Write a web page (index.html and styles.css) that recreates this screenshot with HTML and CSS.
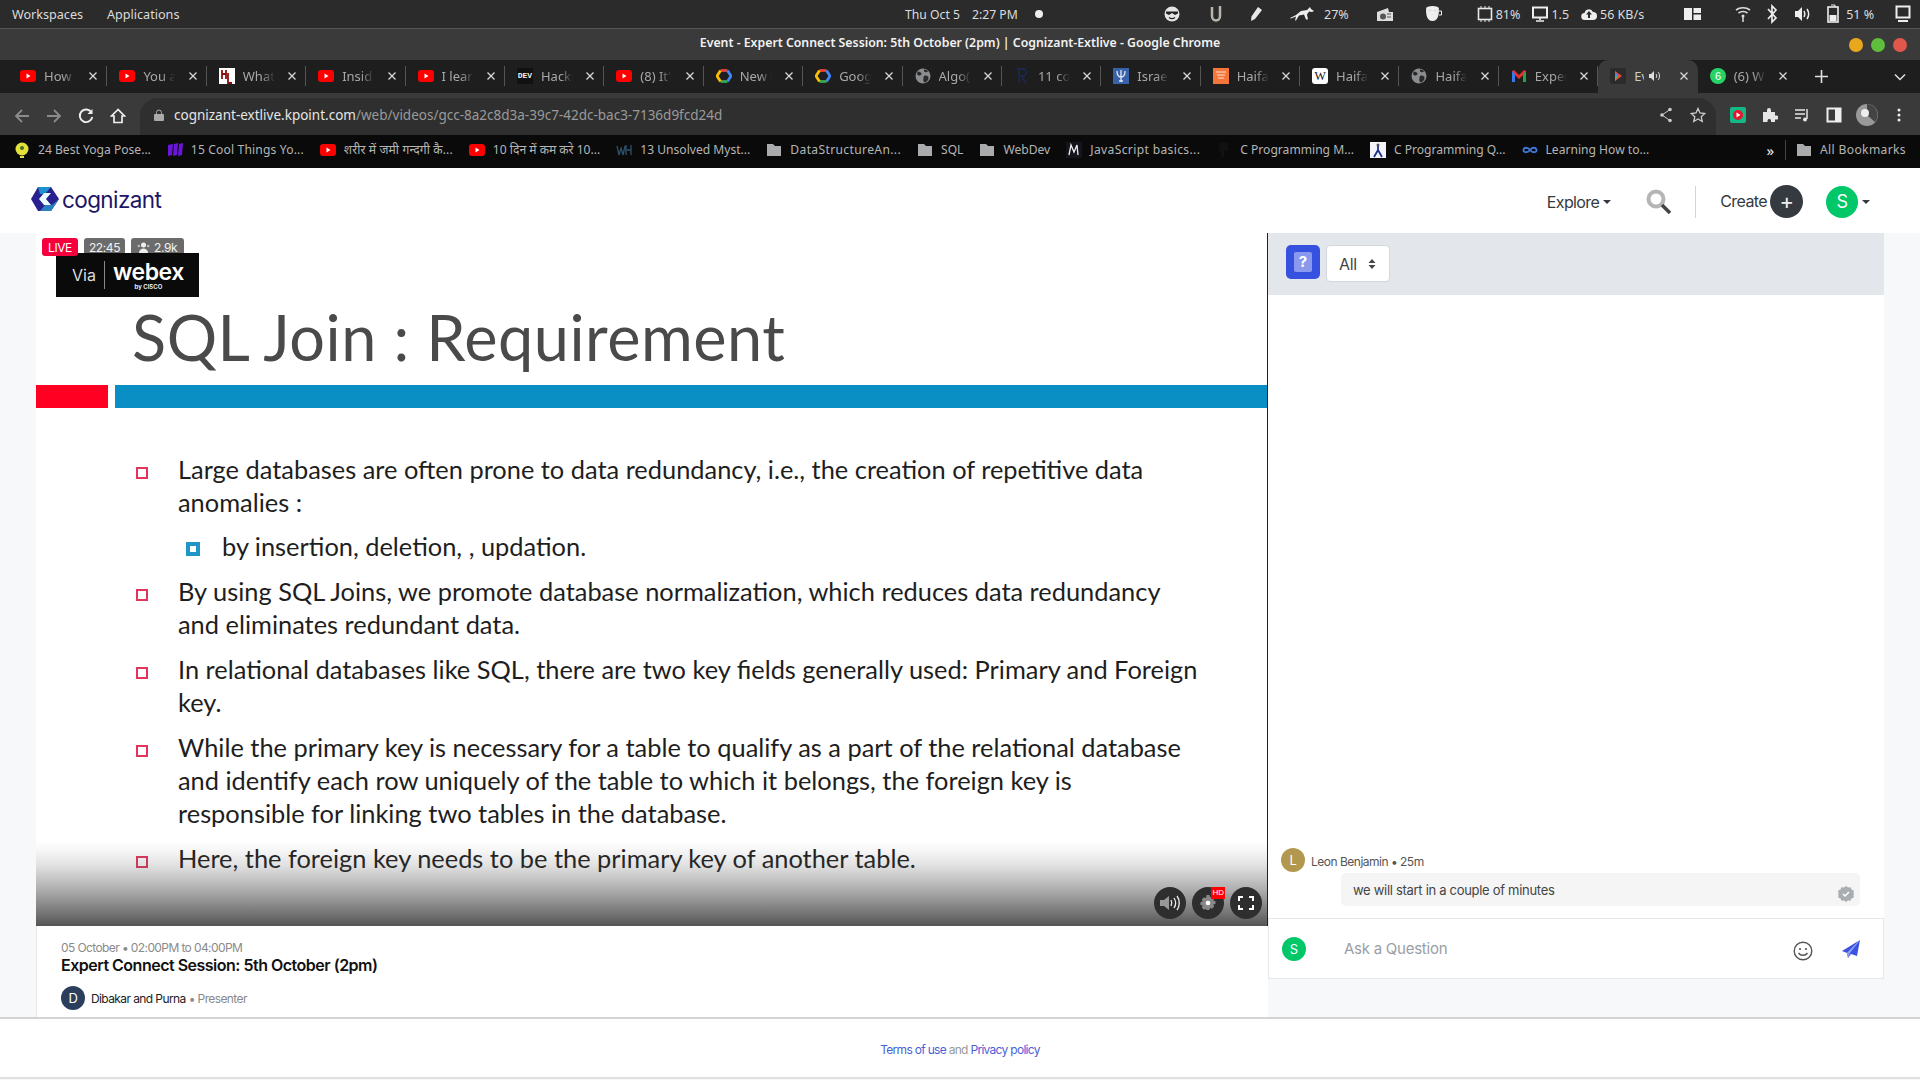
FILE: index.html
```html
<!DOCTYPE html>
<html>
<head>
  <title>Event - Expert Connect Session: 5th October (2pm) | Cognizant-Extlive</title>
  <meta name="viewport" content="width=device-width, initial-scale=1">
  <link rel="stylesheet" href="styles.css">
</head>
<body>
  <svg class="defs" width="0" height="0">
    <symbol id="yt" viewBox="0 0 16 16"><rect y="2" width="16" height="12" rx="3" fill="#f00"/><path d="M6.5 5.5 10.5 8l-4 2.500z" fill="#fff"/></symbol>
    <symbol id="globe" viewBox="0 0 16 16"><circle cx="8" cy="8" r="7.500" fill="#8a8d91"/><path d="M3 3.500c2 0 3 1 3.500 2S5 8 3.500 7.500 1.500 5 3 3.500zM9 8c2-1 4 0 4.500 1.500S12 14 10 14.500 8 10 9 8zM9 1.500c1.500 0 3 .5 4 2-1 1-3 1-4 0z" fill="#2a2a2a"/></symbol>
    <symbol id="gcloud" viewBox="0 0 16 16"><g fill="none" stroke-width="2.800"><path d="M4.500 2.500h7" stroke="#ea4335"/><path d="M11.500 2.500 15 8l-3.500 5.500" stroke="#4285f4"/><path d="M11.500 13.500h-7" stroke="#34a853"/><path d="M4.500 13.500 1 8l3.500-5.500" stroke="#fbbc05"/></g></symbol>
    <symbol id="folder" viewBox="0 0 16 16"><path d="M1 2h6l2 2h6v10H1z" fill="#a9abad"/></symbol>
    <symbol id="x" viewBox="0 0 10 10"><path d="M1.500 1.500l7 7M8.500 1.500l-7 7" stroke="#d8d8d8" stroke-width="1.300" fill="none"/></symbol>
  </svg>

  <!-- desktop panel -->
  <div class="panel">
    <div class="panel-menu"><span>Workspaces</span><span>Applications</span></div>
    <div class="panel-clock"><span>Thu Oct 5</span><span>2:27 PM</span><i class="dot"></i></div>
    <div class="tray">
      <svg class="t-face" width="16" height="16" viewBox="0 0 16 16"><circle cx="8" cy="8" r="7.500" fill="#e4e4e4"/><path d="M2 5.500h12v2l-3 1.500-3-2-3 2-3-1.500z" fill="#222"/><path d="M5 11.500c2 1.500 4 1.500 6 0" stroke="#222" stroke-width="1.200" fill="none"/></svg>
      <svg class="t-magnet" width="14" height="18" viewBox="0 0 14 18"><path d="M3 2v9c0 3 2 4.500 4 4.500s4-1.500 4-4.500V1" stroke="#b9b5ae" stroke-width="2.500" fill="none"/></svg>
      <svg class="t-pen" width="16" height="18" viewBox="0 0 16 18"><path d="M10 2l4 3-7 9-4 2 .5-4.500z" fill="#e8e8e8"/></svg>
      <svg class="t-horse" width="26" height="16" viewBox="0 0 26 16"><path d="M1 12l6-3 5-4 6-1 3-3 1 2 3 2-2 1-3-.5-2 3 1 5h-2l-2-5-5 1-3 5H6l1-4-5 2z" fill="#eee"/></svg>
      <span class="t-pct">27%</span>
      <svg class="t-radio" width="18" height="18" viewBox="0 0 18 18"><path d="M1 7l11-4 1 4h4v9H1z" fill="#ddd"/><circle cx="7" cy="11.500" r="3" fill="#555"/><path d="M11 9h4M11 12h4" stroke="#555"/></svg>
      <svg class="t-cup" width="17" height="18" viewBox="0 0 17 18"><ellipse cx="7.500" cy="3.500" rx="6.500" ry="2.500" fill="#eee"/><path d="M1 4c0 6 1 12 6.500 12S14 10 14 4c-3 2-10 2-13 0z" fill="#eee"/><path d="M14 6h2.500v4H14" stroke="#eee" fill="none"/></svg>
      <div class="tray-stats">
        <svg width="16" height="18" viewBox="0 0 16 18"><rect x="1.500" y="3.500" width="13" height="11" fill="none" stroke="#e8e8e8" stroke-width="1.600"/><path d="M4 1v2M8 1v2M12 1v2M4 15v2M8 15v2M12 15v2" stroke="#e8e8e8"/></svg><span class="stat-a">81%</span>
        <svg width="16" height="16" viewBox="0 0 16 16"><rect x="1" y="1.500" width="14" height="10" fill="none" stroke="#eee" stroke-width="2"/><path d="M8 12v2M4 15h8" stroke="#eee" stroke-width="1.600"/></svg><span class="stat-b">1.5</span>
        <svg width="16" height="14" viewBox="0 0 16 14"><path d="M4 13a3.500 3.500 0 0 1-.5-7A4.500 4.500 0 0 1 12 5a4 4 0 0 1 0 8z" fill="#eee"/><path d="M8 4l3 3.500H9V11H7V7.500H5z" fill="#2b2b2b"/></svg><span>56 KB/s</span>
      </div>
      <svg class="t-layout" width="17" height="14" viewBox="0 0 17 14"><path d="M0 1h8v12H0zM9.500 1H17v5H9.500zM9.500 7.500H17V13H9.500z" fill="#eee"/></svg>
      <svg class="t-wifi" width="16" height="18" viewBox="0 0 16 18"><path d="M1 5c4-3 10-3 14 0M3.500 8c3-2 6-2 9 0" stroke="#ddd" stroke-width="1.600" fill="none"/><circle cx="8" cy="11" r="1.500" fill="#ddd"/><path d="M8 11v6" stroke="#ddd" stroke-width="1.500"/></svg>
      <svg class="t-bt" width="12" height="20" viewBox="0 0 12 20"><path d="M2 5l8 9-4 4V2l4 4-8 9" stroke="#eee" stroke-width="1.700" fill="none"/></svg>
      <svg class="t-vol" width="17" height="16" viewBox="0 0 17 16"><path d="M1 5h3l4-4v14l-4-4H1z" fill="#eee"/><path d="M10 5c1 2 1 4 0 6M13 3c2 3 2 7 0 10" stroke="#eee" stroke-width="1.500" fill="none"/></svg>
      <svg class="t-batt" width="12" height="20" viewBox="0 0 12 20"><path d="M4 1h4v2" fill="none" stroke="#eee"/><rect x="1" y="3" width="10" height="15" fill="none" stroke="#eee" stroke-width="1.600"/><rect x="2.500" y="11" width="7" height="6" fill="#eee"/></svg>
      <span class="t-battpct">51 %</span>
      <svg class="t-mon" width="16" height="18" viewBox="0 0 16 18"><rect x="1.500" y="1.500" width="13" height="11" fill="none" stroke="#eee" stroke-width="2"/><path d="M3 16h10" stroke="#eee" stroke-width="2"/></svg>
    </div>
  </div>

  <!-- browser window -->
  <div class="titlebar">
    <div class="title">Event - Expert Connect Session: 5th October (2pm) | Cognizant-Extlive - Google Chrome</div>
    <div class="wbtns"><i class="wb wb-min"></i><i class="wb wb-max"></i><i class="wb wb-close"></i></div>
  </div>

  <div class="tabstrip">
    <div class="tab"><svg class="fav"><use href="#yt"/></svg><span class="tab-t">How t</span><svg class="tx"><use href="#x"/></svg></div>
    <div class="tab"><svg class="fav"><use href="#yt"/></svg><span class="tab-t">You a</span><svg class="tx"><use href="#x"/></svg></div>
    <div class="tab"><svg class="fav" viewBox="0 0 16 16"><rect width="16" height="16" fill="#fff"/><path d="M3 2v9M7 2v9M3 6h4M9 5v10h4" stroke="#8a1010" stroke-width="1.800" fill="none"/></svg><span class="tab-t">What</span><svg class="tx"><use href="#x"/></svg></div>
    <div class="tab"><svg class="fav"><use href="#yt"/></svg><span class="tab-t">Insid</span><svg class="tx"><use href="#x"/></svg></div>
    <div class="tab"><svg class="fav"><use href="#yt"/></svg><span class="tab-t">I lear</span><svg class="tx"><use href="#x"/></svg></div>
    <div class="tab"><span class="fav fav-dev">DEV</span><span class="tab-t">Hackt</span><svg class="tx"><use href="#x"/></svg></div>
    <div class="tab"><svg class="fav"><use href="#yt"/></svg><span class="tab-t">(8) It's</span><svg class="tx"><use href="#x"/></svg></div>
    <div class="tab"><svg class="fav"><use href="#gcloud"/></svg><span class="tab-t">New (</span><svg class="tx"><use href="#x"/></svg></div>
    <div class="tab"><svg class="fav"><use href="#gcloud"/></svg><span class="tab-t">Goog</span><svg class="tx"><use href="#x"/></svg></div>
    <div class="tab"><svg class="fav"><use href="#globe"/></svg><span class="tab-t">Algo(</span><svg class="tx"><use href="#x"/></svg></div>
    <div class="tab"><svg class="fav" viewBox="0 0 16 16"><path d="M3 1h6a3.500 3.500 0 0 1 0 7H7l5 7M5 1v14" stroke="#1c2a5c" stroke-width="1.300" fill="none"/></svg><span class="tab-t">11 co</span><svg class="tx"><use href="#x"/></svg></div>
    <div class="tab"><svg class="fav" viewBox="0 0 16 16"><rect width="16" height="16" fill="#3a62a8"/><path d="M8 2v12M4 3c0 4 2 6 4 6s4-2 4-6M6 13h4" stroke="#dfe8f5" stroke-width="1.300" fill="none"/></svg><span class="tab-t">Israel</span><svg class="tx"><use href="#x"/></svg></div>
    <div class="tab"><svg class="fav" viewBox="0 0 16 16"><rect width="16" height="16" fill="#f5753b"/><path d="M3 4h10M4 7h8M5 10h6" stroke="#fde3d3"/></svg><span class="tab-t">Haifa</span><svg class="tx"><use href="#x"/></svg></div>
    <div class="tab"><span class="fav fav-wiki">W</span><span class="tab-t">Haifa</span><svg class="tx"><use href="#x"/></svg></div>
    <div class="tab"><svg class="fav"><use href="#globe"/></svg><span class="tab-t">Haifa</span><svg class="tx"><use href="#x"/></svg></div>
    <div class="tab"><svg class="fav" viewBox="0 0 16 16"><path d="M1 14V3l2-1 5 5 5-5 2 1v11h-3V7L8 11 4 7v7z" fill="#e5322d"/><path d="M1 14V3l3 3v8z" fill="#3a7ae8"/><path d="M15 14V3l-3 3v8z" fill="#27a24b"/></svg><span class="tab-t">Exper</span><svg class="tx"><use href="#x"/></svg></div>
    <div class="tab tab-on"><svg class="fav" viewBox="0 0 16 16"><rect width="16" height="16" rx="2" fill="#2b2b2b"/><path d="M5 3l7 5-7 5z" fill="#e8483f"/><path d="M5 3v5h3z" fill="#3f8be8"/><path d="M5 8v5l3-5z" fill="#3fbf6a"/></svg><span class="tab-t tab-t-short">Ev</span><svg class="spk" width="12" height="12" viewBox="0 0 12 12"><path d="M0 4h2l3-3v10L2 8H0z" fill="#ddd"/><path d="M7 4c1 1 1 3 0 4M9 2c2 2 2 6 0 8" stroke="#ddd" fill="none"/></svg><svg class="tx"><use href="#x"/></svg></div>
    <div class="tab tab-last"><svg class="fav" viewBox="0 0 16 16"><circle cx="8" cy="8" r="8" fill="#25d366"/><text x="8" y="12" font-size="11" text-anchor="middle" fill="#fff" font-family="Liberation Sans">6</text></svg><span class="tab-t">(6) W</span><svg class="tx"><use href="#x"/></svg></div>
    <svg class="newtab" width="13" height="13" viewBox="0 0 13 13"><path d="M6.500 0v13M0 6.500h13" stroke="#e0e0e0" stroke-width="1.600"/></svg>
    <svg class="tabmenu" width="12" height="8" viewBox="0 0 12 8"><path d="M1 1.500l5 5 5-5" stroke="#e0e0e0" stroke-width="1.500" fill="none"/></svg>
  </div>

  <div class="toolbar">
    <div class="nav">
      <svg width="16" height="16" viewBox="0 0 16 16"><path d="M15 8H2M8 2 2 8l6 6" stroke="#8b8b8b" stroke-width="1.800" fill="none"/></svg>
      <svg width="16" height="16" viewBox="0 0 16 16"><path d="M1 8h13M8 2l6 6-6 6" stroke="#8b8b8b" stroke-width="1.800" fill="none"/></svg>
      <svg width="16" height="16" viewBox="0 0 16 16"><path d="M13.500 4.500A6.300 6.300 0 1 0 14.300 9" stroke="#eee" stroke-width="1.900" fill="none"/><path d="M14.500 1v5h-5z" fill="#eee"/></svg>
      <svg width="16" height="16" viewBox="0 0 16 16"><path d="M8 1.500 1.500 8H4v6.500h8V8h2.500z" stroke="#eee" stroke-width="1.700" fill="none"/></svg>
    </div>
    <div class="omni">
      <svg class="lock" width="10" height="12" viewBox="0 0 10 12"><path d="M2.500 5V3.500a2.500 2.500 0 0 1 5 0V5" stroke="#aaa" fill="none"/><rect y="5" width="10" height="7" rx="1" fill="#aaa"/></svg>
      <span class="url"><b>cognizant-extlive.kpoint.com</b>/web/videos/gcc-8a2c8d3a-39c7-42dc-bac3-7136d9fcd24d</span>
      <svg class="omni-share" width="14" height="16" viewBox="0 0 14 16"><circle cx="11" cy="2.500" r="1.800" fill="#ccc"/><circle cx="3" cy="8" r="1.800" fill="#ccc"/><circle cx="11" cy="13.500" r="1.800" fill="#ccc"/><path d="M11 2.500 3 8l8 5.500" stroke="#ccc" fill="none"/></svg>
      <svg class="omni-star" width="16" height="16" viewBox="0 0 16 16"><path d="M8 1.500 10 6l4.800.5-3.600 3.200 1 4.800L8 12l-4.200 2.500 1-4.800L1.200 6.500 6 6z" stroke="#ccc" stroke-width="1.300" fill="none"/></svg>
    </div>
    <div class="ext">
      <svg width="16" height="16" viewBox="0 0 16 16"><rect width="16" height="16" rx="2" fill="#12b886"/><circle cx="8" cy="8" r="5" fill="#e8142e"/><path d="M6.500 5.500 10.500 8l-4 2.500z" fill="#fff"/></svg>
      <svg width="16" height="16" viewBox="0 0 16 16"><path d="M1 5h4V3a2 2 0 0 1 4 0v2h4v3.500h1.500a2 2 0 0 1 0 4H13V15H9v-1.500a1.800 1.800 0 0 0-3.500 0V15H1z" fill="#e6e6e6"/></svg>
      <svg width="16" height="16" viewBox="0 0 16 16"><path d="M1 3h10M1 7h10M1 11h6" stroke="#e6e6e6" stroke-width="1.500"/><path d="M13 2v10" stroke="#e6e6e6" stroke-width="1.500"/><circle cx="11" cy="12.500" r="2" fill="#e6e6e6"/></svg>
      <svg width="16" height="16" viewBox="0 0 16 16"><rect x="1.500" y="1.500" width="13" height="13" fill="none" stroke="#eee" stroke-width="2"/><rect x="9" y="2" width="5" height="12" fill="#eee"/></svg>
      <svg class="ext-me" width="22" height="22" viewBox="0 0 22 22"><circle cx="11" cy="11" r="11" fill="#999"/><path d="M11 0a11 11 0 0 1 8 18L11 11z" fill="#444"/><circle cx="9" cy="9" r="4" fill="#eee"/></svg>
      <svg width="4" height="14" viewBox="0 0 4 14"><circle cx="2" cy="2" r="1.500" fill="#eee"/><circle cx="2" cy="7" r="1.500" fill="#eee"/><circle cx="2" cy="12" r="1.500" fill="#eee"/></svg>
    </div>
  </div>

  <div class="bookmarks">
    <div class="bm"><svg class="fav" viewBox="0 0 16 16"><circle cx="8" cy="7" r="6.500" fill="#e3e23c"/><path d="M6 15h4" stroke="#e3e23c" stroke-width="2"/><circle cx="8" cy="6" r="2" fill="#4a6b2a"/></svg><span>24 Best Yoga Pose...</span></div>
    <div class="bm bm-mid"><svg class="fav" viewBox="0 0 16 16"><path d="M1 3l5-1-1 11-4 1zM7 2l4-1-1 12-4 1zM12 2l4-1-1 12-4 1z" fill="#6a16d8"/></svg><span>15 Cool Things Yo...</span></div>
    <div class="bm bm-mid"><svg class="fav"><use href="#yt"/></svg><span>शरीर में जमी गन्दगी कै...</span></div>
    <div class="bm"><svg class="fav"><use href="#yt"/></svg><span>10 दिन में कम करे 10...</span></div>
    <div class="bm"><svg class="fav" viewBox="0 0 16 16"><path d="M1 4l2 9 2-7 2 7 2-9M10 3v10M15 3v10M10 8h5" stroke="#2d5168" stroke-width="1.300" fill="none"/></svg><span>13 Unsolved Myst...</span></div>
    <div class="bm bm-loose"><svg class="fav"><use href="#folder"/></svg><span>DataStructureAn...</span></div>
    <div class="bm"><svg class="fav"><use href="#folder"/></svg><span>SQL</span></div>
    <div class="bm"><svg class="fav"><use href="#folder"/></svg><span>WebDev</span></div>
    <div class="bm bm-loose"><svg class="fav" viewBox="0 0 16 16"><rect width="16" height="16" fill="#14141c"/><path d="M3 13l2-10 3 7 3-7 1 10" stroke="#eee" stroke-width="1.300" fill="none"/></svg><span>JavaScript basics...</span></div>
    <div class="bm"><svg class="fav" viewBox="0 0 16 16"><path d="M3 1h9v8H8v6H5V9H3z" fill="#111"/></svg><span>C Programming M...</span></div>
    <div class="bm"><svg class="fav" viewBox="0 0 16 16"><rect width="16" height="16" fill="#f4f4f8"/><path d="M8 3v5M4 15l4-7 4 7" stroke="#1d2f8a" stroke-width="1.800" fill="none"/><circle cx="8" cy="3" r="1.500" fill="#555"/></svg><span>C Programming Q...</span></div>
    <div class="bm"><svg class="fav" viewBox="0 0 16 16"><path d="M8 8C6 5 2 5 1.500 8S6 11 8 8s6-3 6.500 0S10 11 8 8z" stroke="#3f78d8" stroke-width="1.800" fill="none"/></svg><span>Learning How to...</span></div>
    <div class="bm-end">
      <span class="bm-more">»</span>
      <div class="bm bm-all bm-loose"><svg class="fav"><use href="#folder"/></svg><span>All Bookmarks</span></div>
    </div>
  </div>

  <!-- page -->
  <header class="site-head">
    <div class="logo">
      <svg width="28" height="26" viewBox="0 0 28 26"><path d="M7 1h13l8 12-8 12H7L0 13z" fill="#2a1f8f"/><path d="M7 1h13l-6 7H9z" fill="#1f8fd0"/><path d="M28 13l-8 12H9l5-6h7z" fill="#2a7fc0"/><path d="M8 13l5-6h7l-5 6 5 6h-7z" fill="#eafcff"/></svg>
      <span class="logo-t">cognizant</span>
    </div>
    <div class="head-r">
      <span class="explore">Explore<i class="caret"></i></span>
      <svg class="search" width="26" height="25" viewBox="0 0 26 25"><circle cx="10" cy="10" r="7.500" fill="none" stroke="#b5b5b5" stroke-width="4"/><path d="M16 16l8 8" stroke="#444" stroke-width="3.500"/></svg>
      <span class="head-sep"></span>
      <span class="create">Create</span>
      <span class="plus">+</span>
      <span class="me">S</span><i class="caret caret-me"></i>
    </div>
  </header>

  <main class="stage">
    <section class="left">
      <div class="video">
        <div class="slide-title">SQL Join : Requirement</div>
        <div class="slide-bars"><i class="bar-red"></i><i class="bar-blue"></i></div>
        <div class="slide-list">
          <div class="point"><i class="bul"></i><p>Large databases are often prone to data redundancy, i.e., the creation of repetitive data<br>anomalies :</p></div>
          <div class="point point-sub"><i class="bul-sub"></i><p>by insertion, deletion, , updation.</p></div>
          <div class="point"><i class="bul"></i><p>By using SQL Joins, we promote database normalization, which reduces data redundancy<br>and eliminates redundant data.</p></div>
          <div class="point"><i class="bul"></i><p>In relational databases like SQL, there are two key fields generally used: Primary and Foreign<br>key.</p></div>
          <div class="point"><i class="bul"></i><p>While the primary key is necessary for a table to qualify as a part of the relational database<br>and identify each row uniquely of the table to which it belongs, the foreign key is<br>responsible for linking two tables in the database.</p></div>
          <div class="point"><i class="bul"></i><p>Here, the foreign key needs to be the primary key of another table.</p></div>
        </div>

        <div class="shade"></div>
        <div class="badges">
          <span class="badge badge-live">LIVE</span>
          <span class="badge badge-time">22:45</span>
          <span class="badge badge-views"><svg width="13" height="11" viewBox="0 0 13 11"><circle cx="6.500" cy="3" r="2.500" fill="#eee"/><path d="M2 11c0-6 9-6 9 0z" fill="#eee"/><circle cx="1.800" cy="4" r="1.300" fill="#bbb"/><circle cx="11.200" cy="4" r="1.300" fill="#bbb"/></svg> 2.9k</span>
        </div>
        <div class="webex">
          <span class="via">Via</span><i class="webex-sep"></i>
          <span class="webex-name">webex<small>by CISCO</small></span>
        </div>
        <div class="controls">
          <span class="ctl"><svg width="20" height="16" viewBox="0 0 20 16"><path d="M0 5h4l5-4v14l-5-4H0z" fill="#999"/><path d="M11 5c1 2 1 4 0 6M14 3c2 3 2 7 0 10M17 1c3 4 3 10 0 14" stroke="#eee" stroke-width="1.300" fill="none"/></svg></span>
          <span class="ctl"><svg width="16" height="16" viewBox="0 0 16 16"><path d="M6.500 0h3l.5 2.200 2-1 2.200 2.200-1 2 2.300.6v3l-2.300.6 1 2-2.200 2.200-2-1-.5 2.200h-3L6 13.800l-2 1-2.200-2.200 1-2L.5 10V7l2.300-.6-1-2L4 2.200l2 1z" fill="#888"/><circle cx="8" cy="8" r="2.300" fill="#fff"/></svg><b class="hd">HD</b></span>
          <span class="ctl"><svg width="16" height="14" viewBox="0 0 16 14"><path d="M1 5V1h4M11 1h4v4M15 9v4h-4M5 13H1V9" stroke="#fff" stroke-width="2" fill="none"/></svg></span>
        </div>
      </div>
      <div class="info">
        <div class="info-date">05 October • 02:00PM to 04:00PM</div>
        <h1 class="info-title">Expert Connect Session: 5th October (2pm)</h1>
        <div class="info-who"><span class="ava ava-d">D</span><span class="who-name">Dibakar and Purna</span><span class="who-role"> • Presenter</span></div>
      </div>
    </section>

    <aside class="chat">
      <div class="chat-head">
        <span class="q-btn"><b>?</b></span>
        <span class="q-filter">All<svg width="8" height="12" viewBox="0 0 8 12"><path d="M4 1l3.500 4h-7zM4 11 .5 7h7z" fill="#444"/></svg></span>
      </div>
      <div class="chat-body">
        <div class="msg-head"><span class="ava ava-l">L</span><span class="msg-who">Leon Benjamin • 25m</span></div>
        <div class="msg">we will start in a couple of minutes
          <svg class="msg-ok" width="16" height="16" viewBox="0 0 16 16"><path d="M8 0l2 1.500 2.500-.3 1 2.300 2.300 1L15.500 7 16 8l-.5 1 .3 2.500-2.300 1-1 2.300-2.500-.3L8 16l-2-1.500-2.500.3-1-2.300-2.300-1L.5 9 0 8l.5-1-.3-2.500 2.300-1 1-2.300L6 1.500z" fill="#a9adb2"/><path d="M5 8l2 2 4-4" stroke="#fff" stroke-width="1.500" fill="none"/></svg>
        </div>
      </div>
      <div class="composer">
        <span class="ava ava-s">S</span>
        <span class="ask">Ask a Question</span>
        <svg class="smile" width="20" height="20" viewBox="0 0 20 20"><circle cx="10" cy="10" r="8.800" fill="none" stroke="#555" stroke-width="1.400"/><circle cx="7" cy="8" r="1.100" fill="#555"/><circle cx="13" cy="8" r="1.100" fill="#555"/><path d="M5.500 12c2 3 7 3 9 0" stroke="#555" stroke-width="1.400" fill="none"/></svg>
        <svg class="send" width="18" height="18" viewBox="0 0 18 18"><path d="M18 0 0 11l5 2z" fill="#3b54e0"/><path d="M18 0 5 13l1 5 3-4 6 2z" fill="#3b54e0"/><path d="M18 0 5 13l1 5 2-5z" fill="#8fa0f0"/></svg>
      </div>
    </aside>
  </main>

  <footer class="foot"><a>Terms of use</a> and <a>Privacy policy</a></footer>
</body>
</html>
```

FILE: styles.css
```css
* {
  box-sizing: border-box;
}

html, body {
  margin: 0;
  height: 1080px;
  overflow: hidden;
}

body {
  background-color: #f7f8fa;
  font-family: "Inter", "Liberation Sans", sans-serif;
  color: #333;
}

i {
  display: block;
}

.defs {
  position: absolute;
}

/* desktop panel */
.panel {
  display: flex;
  align-items: center;
  height: 28px;
  padding-left: 12px;
  background-color: #2b2b2b;
  color: #dcdcdc;
  font: 12.600px "Noto Sans", sans-serif;
}

.panel-menu {
  display: flex;
  gap: 24px;
  width: 893px;
}

.panel-clock {
  display: flex;
  align-items: center;
  gap: 12px;
  width: 256px;
  font-size: 12.200px;
}

.dot {
  width: 8px;
  height: 8px;
  margin-left: 5px;
  border-radius: 50%;
  background-color: #eee;
}

.tray {
  display: flex;
  align-items: center;
  flex: 1;
  font-size: 12.500px;
}

.t-face { margin-left: 3px; }
.t-magnet { margin-left: 29px; }
.t-pen { margin-left: 25px; }
.t-horse { margin-left: 25px; }
.t-pct { margin-left: 9px; }
.t-radio { margin-left: 27px; }
.t-cup { margin-left: 31px; }
.t-layout { margin-left: 40px; }
.t-wifi { margin-left: 34px; }
.t-bt { margin-left: 15px; }
.t-vol { margin-left: 16px; }
.t-batt { margin-left: 16px; }
.t-battpct { margin-left: 7px; }
.t-mon { margin-left: 21px; }

.tray-stats {
  display: flex;
  align-items: center;
  gap: 3px;
  margin-left: 35px;
}

.stat-a, .stat-b {
  margin-right: 9px;
}

/* window title */
.titlebar {
  display: flex;
  align-items: center;
  justify-content: center;
  position: relative;
  height: 32px;
  padding-bottom: 4px;
  border-top: 1px solid #555;
  background-color: #3a3a3a;
  color: #f2f2f2;
  font: 600 12.300px "Noto Sans", sans-serif;
}

.wbtns {
  display: flex;
  gap: 8px;
  position: absolute;
  right: 13px;
  top: 9px;
}

.wb {
  width: 14px;
  height: 14px;
  border-radius: 50%;
}

.wb-min { background-color: #e9a81c; }
.wb-max { background-color: #5fbe3c; }
.wb-close { background-color: #e2574c; }

/* tabs */
.tabstrip {
  display: flex;
  align-items: center;
  height: 33px;
  padding-left: 8px;
  background-color: #1e1e1e;
  color: #a8a8a8;
  font: 13px "Noto Sans", sans-serif;
}

.tab {
  display: flex;
  align-items: center;
  position: relative;
  width: 99.400px;
  height: 33px;
  padding: 0 0 2px 12px;
  flex: none;
}

.tab::after {
  content: "";
  position: absolute;
  right: 0;
  top: 6px;
  height: 20px;
  width: 1px;
  background-color: #555;
}

.tab-on::after, .tab-last::after {
  display: none;
}

.tab-on {
  background-color: #3a3a3a;
  border-radius: 10px 10px 0 0;
  color: #ccc;
}

.fav {
  display: block;
  width: 16px;
  height: 16px;
  flex: none;
}

.fav-dev {
  background-color: #111;
  color: #eee;
  font: bold 8px/16px "Liberation Mono", monospace;
  text-align: center;
}

.fav-wiki {
  border-radius: 3px;
  background-color: #fff;
  color: #111;
  font: 12px/16px "Liberation Serif", serif;
  text-align: center;
}

.tab-t {
  width: 32px;
  margin-left: 8px;
  overflow: hidden;
  white-space: nowrap;
  -webkit-mask-image: linear-gradient(to right, #000 60%, transparent);
  mask-image: linear-gradient(to right, #000 60%, transparent);
}

.tab-t-short {
  width: 10px;
  -webkit-mask-image: none;
  mask-image: none;
}

.spk {
  margin-left: 5px;
}

.tx {
  position: absolute;
  right: 9px;
  top: 11px;
  width: 10px;
  height: 10px;
}

.newtab {
  margin-left: 18px;
}

.tabmenu {
  margin-left: 66px;
}

/* toolbar */
.toolbar {
  display: flex;
  align-items: flex-end;
  height: 42px;
  background-color: #3a3a3a;
}

.nav {
  display: flex;
  gap: 16px;
  width: 140px;
  height: 37px;
  padding: 10px 0 0 14px;
}

.omni {
  display: flex;
  align-items: center;
  width: 1576px;
  height: 37px;
  padding: 0 10px 4px 14px;
  border-radius: 18px 18px 0 0;
  background-color: #2f2f2f;
  color: #9a9a9a;
  font: 13.500px "Noto Sans", sans-serif;
}

.url {
  margin-left: 10px;
  flex: 1;
}

.url b {
  font-weight: 400;
  color: #e6e6e6;
}

.omni-share {
  margin-right: 17px;
}

.ext {
  display: flex;
  align-items: center;
  gap: 16px;
  height: 37px;
  padding: 0 0 4px 14px;
}

.ext-me {
  margin: 0 3px 0 -2px;
}

/* bookmarks */
.bookmarks {
  display: flex;
  align-items: center;
  gap: 16px;
  height: 33px;
  padding: 0 14px 4px 14px;
  background-color: #0a0a0a;
  color: #b5b5b5;
  font: 12.100px "Noto Sans", "Noto Sans CJK SC", sans-serif;
}

.bm {
  display: flex;
  align-items: center;
  gap: 8px;
  white-space: nowrap;
}

.bm-mid {
  letter-spacing: 0.15px;
}

.bm-loose {
  letter-spacing: 0.35px;
}

.bm-end {
  display: flex;
  align-items: center;
  margin-left: auto;
}

.bm-more {
  padding-right: 11px;
  border-right: 1px solid #444;
  color: #eee;
  font-size: 15px;
  line-height: 20px;
}

.bm-all {
  margin-left: 10px;
}

/* site header */
.site-head {
  display: flex;
  align-items: center;
  justify-content: space-between;
  height: 65px;
  padding: 2px 50px 0 31px;
  background-color: #fff;
}

.logo {
  display: flex;
  align-items: center;
  gap: 3px;
  margin-bottom: 5px;
}

.logo-t {
  color: #1c1566;
  font: 400 22.500px "Inter", sans-serif;
  letter-spacing: -0.6px;
}

.head-r {
  display: flex;
  align-items: center;
  color: #343a40;
  font-size: 16px;
  letter-spacing: -0.6px;
}

.explore {
  display: flex;
  align-items: center;
  gap: 4px;
}

.caret {
  width: 0;
  height: 0;
  border: 4px solid transparent;
  border-top-color: #343a40;
  border-bottom: 0;
}

.search {
  margin-left: 35px;
}

.head-sep {
  width: 1px;
  height: 32px;
  margin: 0 24px 0 23px;
  background-color: #d5d5d5;
}

.create {
  margin-bottom: 2px;
}

.plus {
  width: 33px;
  height: 33px;
  margin-left: 3px;
  border-radius: 50%;
  background-color: #343a40;
  color: #eee;
  font-size: 22px;
  line-height: 32px;
  text-align: center;
}

.me {
  width: 32px;
  height: 32px;
  margin-left: 23px;
  border-radius: 50%;
  background-color: #00c767;
  color: #fff;
  font-size: 18px;
  line-height: 32px;
  text-align: center;
}

.caret-me {
  margin-left: 4px;
}

/* main */
.stage {
  display: flex;
  height: 784px;
  padding-left: 36px;
}

.left {
  width: 1232px;
}

.video {
  position: relative;
  height: 693px;
  overflow: hidden;
  border-right: 1px solid #222;
  background-color: #fff;
}

.slide-title {
  height: 152px;
  padding: 66px 0 0 96px;
  color: #4a4a4a;
  font: 400 63px/76px "Lato", sans-serif;
  letter-spacing: 0.5px;
}

.slide-bars {
  display: flex;
  gap: 7px;
  height: 23px;
}

.bar-red {
  width: 72px;
  background-color: #ff0022;
}

.bar-blue {
  flex: 1;
  background-color: #0a8fc4;
}

.slide-list {
  padding-top: 45px;
  color: #1e1e1e;
  font: 400 25.400px/33px "Lato", sans-serif;
}

.point {
  display: flex;
  margin-bottom: 12px;
  padding-left: 100px;
}

.point p {
  margin: 0;
  white-space: nowrap;
}

.point-sub {
  margin-top: -1px;
  padding-left: 150px;
}

.bul {
  width: 12px;
  height: 12px;
  margin: 14px 30px 0 0;
  border: 2px solid #e2355c;
  flex: none;
}

.bul-sub {
  width: 14px;
  height: 14px;
  margin: 12px 22px 0 0;
  border: 4px solid #1f96c6;
  flex: none;
}

.shade {
  position: absolute;
  left: 0;
  right: 0;
  bottom: 0;
  height: 86px;
  background: linear-gradient(to bottom, rgba(85, 85, 85, 0), rgba(85, 85, 85, 0.05) 12%, rgba(85, 85, 85, 0.18) 30%, rgba(85, 85, 85, 0.5) 60%, #555);
}

.badges {
  display: flex;
  gap: 6px;
  position: absolute;
  left: 6px;
  top: 5px;
}

.badge {
  display: flex;
  align-items: center;
  gap: 3px;
  height: 18px;
  padding: 0 6px;
  border-radius: 3px;
  background-color: #6b6b6b;
  color: #f2f2f2;
  font-size: 12px;
  letter-spacing: -0.4px;
}

.badge-live {
  position: relative;
  z-index: 2;
  background-color: #f5003c;
  color: #fff;
}

.badge-time {
  padding: 0 5px;
}

.badge-views {
  padding: 0 7px 0 6px;
  gap: 4px;
}

.webex {
  display: flex;
  align-items: center;
  position: absolute;
  left: 20px;
  top: 20px;
  width: 143px;
  height: 44px;
  padding-left: 16px;
  background-color: #0a0a0a;
  color: #fff;
}

.via {
  color: #ddd;
  font-size: 16px;
}

.webex-sep {
  width: 1px;
  height: 28px;
  margin: 0 8px;
  background-color: #888;
}

.webex-name {
  display: flex;
  flex-direction: column;
  align-items: center;
  font-weight: 600;
  font-size: 23px;
  line-height: 22px;
  letter-spacing: -0.4px;
}

.webex-name small {
  font-size: 6px;
  line-height: 7px;
  letter-spacing: 0;
}

.controls {
  display: flex;
  gap: 6px;
  position: absolute;
  right: 5px;
  bottom: 7px;
}

.ctl {
  display: flex;
  align-items: center;
  justify-content: center;
  position: relative;
  width: 32px;
  height: 32px;
  border-radius: 50%;
  background-color: #2e2e2e;
}

.hd {
  position: absolute;
  right: -1px;
  top: 0;
  padding: 0 1px;
  background-color: #f00;
  color: #fff;
  font: 400 8px/12px "Liberation Sans", sans-serif;
}

/* event info */
.info {
  height: 91px;
  padding: 14px 0 0 24px;
  border-left: 1px solid #e8e8e8;
  background-color: #fff;
}

.info-date {
  color: #8a8a8a;
  font-size: 12px;
  line-height: 15px;
  letter-spacing: -0.6px;
}

.info-title {
  margin: 0;
  color: #111;
  font-size: 16px;
  font-weight: 600;
  line-height: 20px;
  letter-spacing: -0.5px;
}

.info-who {
  display: flex;
  align-items: center;
  margin-top: 11px;
  font-size: 12px;
  letter-spacing: -0.6px;
}

.ava {
  width: 24px;
  height: 24px;
  border-radius: 50%;
  color: #fff;
  font-size: 13px;
  line-height: 24px;
  text-align: center;
  flex: none;
}

.ava-d { background-color: #2b3f5c; }
.ava-l { background-color: #b2984f; }
.ava-s { background-color: #00c767; }

.who-name {
  margin-left: 6px;
  color: #222;
}

.who-role {
  margin-left: 3px;
  color: #8a8a8a;
}

/* chat */
.chat {
  display: flex;
  flex-direction: column;
  width: 616px;
  height: 746px;
  background-color: #fff;
}

.chat-head {
  display: flex;
  align-items: flex-start;
  gap: 6px;
  height: 62px;
  padding: 12px 0 0 18px;
  background-color: #e3e6ea;
}

.q-btn {
  display: flex;
  align-items: center;
  justify-content: center;
  width: 34px;
  height: 34px;
  border-radius: 5px;
  background-color: #3650e0;
}

.q-btn b {
  width: 18px;
  height: 20px;
  border-radius: 2px;
  background-color: #8a99ee;
  color: #fff;
  font-size: 15px;
  line-height: 20px;
  text-align: center;
}

.q-filter {
  display: flex;
  align-items: center;
  gap: 11px;
  width: 64px;
  height: 37px;
  padding-left: 12px;
  border: 1px solid #d3d6da;
  border-radius: 4px;
  background-color: #fff;
  color: #444;
  font-size: 16px;
  letter-spacing: -0.3px;
}

.chat-body {
  display: flex;
  flex-direction: column;
  justify-content: flex-end;
  flex: 1;
  padding: 0 24px 12px 13px;
}

.msg-head {
  display: flex;
  align-items: center;
  gap: 6px;
  color: #555;
  font-size: 12px;
  letter-spacing: -0.5px;
}

.msg-who {
  padding-top: 2px;
}

.msg {
  position: relative;
  height: 33px;
  margin: 1px 0 0 60px;
  padding: 9px 12px 0;
  border-radius: 5px;
  background-color: #f5f5f5;
  color: #444;
  font-size: 13px;
  letter-spacing: -0.3px;
}

.msg-ok {
  position: absolute;
  right: 6px;
  bottom: 4px;
}

.composer {
  display: flex;
  align-items: center;
  height: 61px;
  padding: 0 23px 0 13px;
  border: 1px solid #e6e8ea;
}

.ask {
  margin-left: 38px;
  flex: 1;
  color: #9a9ea6;
  font-size: 15px;
  letter-spacing: -0.25px;
}

.smile {
  margin: 4px 29px 0 0;
}

/* footer */
.foot {
  height: 62px;
  padding-top: 23px;
  border-top: 2px solid #d4d4d4;
  border-bottom: 2px solid #e0e0e0;
  background-color: #fff;
  color: #9a9a9a;
  font-size: 12px;
  letter-spacing: -0.7px;
  text-align: center;
}

.foot a {
  color: #4a5fd8;
}
```
